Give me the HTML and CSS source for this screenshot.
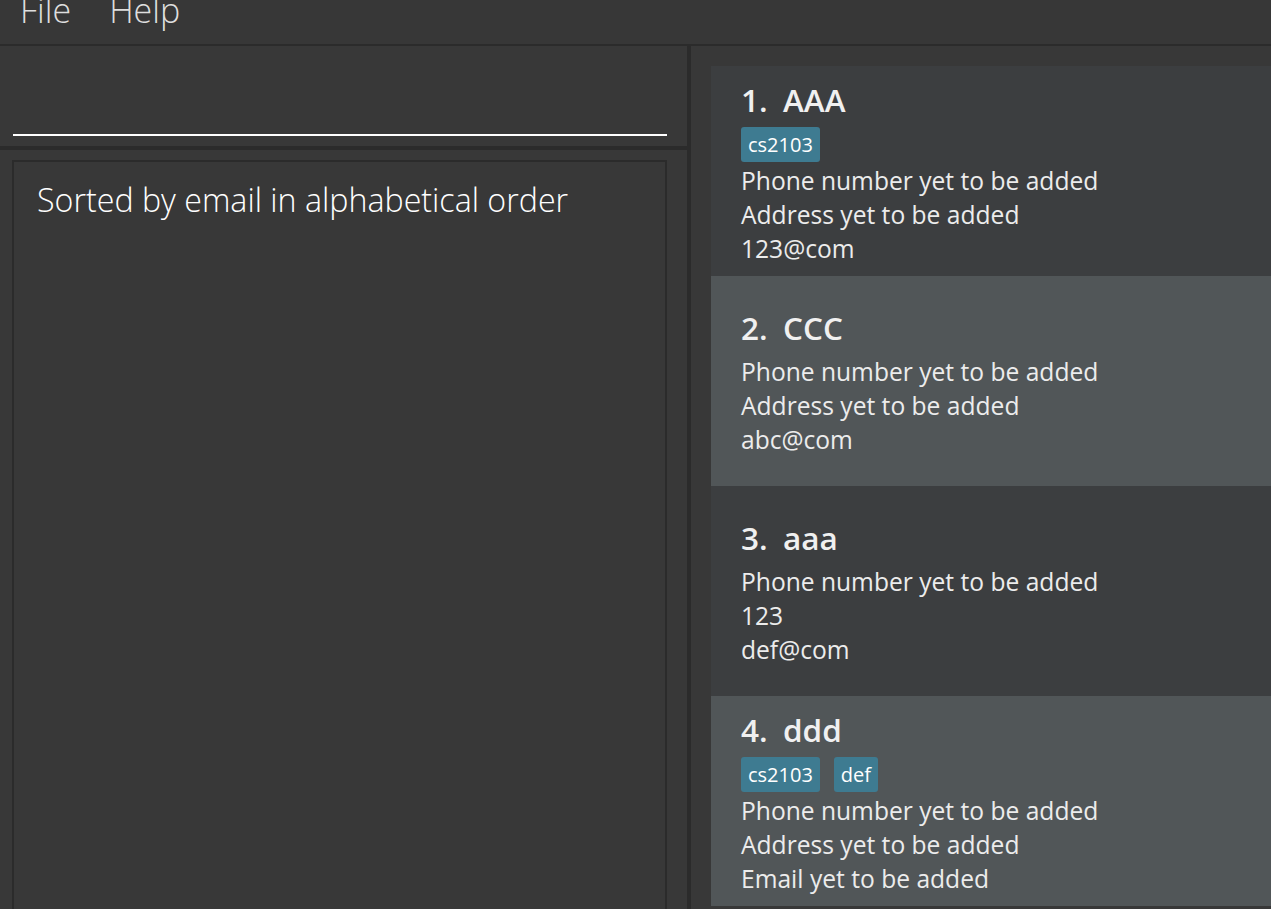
FILE: index.html
```html
<!DOCTYPE html>
<html lang="en">
<head>
<meta charset="utf-8">
<title>Address Book</title>
<link rel="stylesheet" href="styles.css">
</head>
<body>
<div class="app">
  <div class="menubar">
    <span class="menu-item">File</span>
    <span class="menu-item">Help</span>
  </div>
  <div class="main">
    <div class="left">
      <div class="command">
        <div class="command-input"></div>
      </div>
      <div class="hdivider"></div>
      <div class="result">
        <div class="result-box">
          <div class="result-text">Sorted by email in alphabetical order</div>
        </div>
      </div>
    </div>
    <div class="vdivider"></div>
    <div class="right">
      <div class="card odd">
        <div class="name"><span class="id">1.</span><span>AAA</span></div>
        <div class="tags"><span class="tag">cs2103</span></div>
        <div class="details">
          <div>Phone number yet to be added</div>
          <div>Address yet to be added</div>
          <div>123@com</div>
        </div>
      </div>
      <div class="card even">
        <div class="name"><span class="id">2.</span><span>CCC</span></div>
        <div class="details">
          <div>Phone number yet to be added</div>
          <div>Address yet to be added</div>
          <div>abc@com</div>
        </div>
      </div>
      <div class="card odd">
        <div class="name"><span class="id">3.</span><span>aaa</span></div>
        <div class="details">
          <div>Phone number yet to be added</div>
          <div>123</div>
          <div>def@com</div>
        </div>
      </div>
      <div class="card even">
        <div class="name"><span class="id">4.</span><span>ddd</span></div>
        <div class="tags"><span class="tag">cs2103</span><span class="tag">def</span></div>
        <div class="details">
          <div>Phone number yet to be added</div>
          <div>Address yet to be added</div>
          <div>Email yet to be added</div>
        </div>
      </div>
    </div>
  </div>
</div>
</body>
</html>
```
FILE: styles.css
```css
html, body {
  margin: 0;
  padding: 0;
  background: #383838;
  height: 909px;
  overflow: hidden;
}

.app {
  display: flex;
  flex-direction: column;
  height: 909px;
  font-family: "Open Sans", "Noto Sans", sans-serif;
}

.menubar {
  height: 44px;
  border-bottom: 2px solid #2b2b2b;
  background: #373737;
  display: flex;
  gap: 38px;
  padding-left: 20px;
  overflow: hidden;
  flex: none;
}

.menu-item {
  font-weight: 300;
  font-size: 34px;
  line-height: 20px;
  color: #dedede;
  display: block;
  height: 44px;
}

.main {
  flex: 1;
  display: flex;
  min-height: 0;
}

.left {
  width: 687px;
  flex: none;
  display: flex;
  flex-direction: column;
}

.command {
  height: 100px;
  flex: none;
  padding: 50px 0 0 13px;
  box-sizing: border-box;
}

.command-input {
  width: 654px;
  height: 38px;
  border-bottom: 2px solid #ffffff;
}

.hdivider {
  height: 4px;
  background: #2b2b2b;
  flex: none;
}

.result {
  flex: 1;
  padding: 10px 20px 0 12px;
  overflow: hidden;
}

.result-box {
  height: 1000px;
  border: 2px solid #2b2b2b;
  padding: 16px 23px;
  box-sizing: border-box;
}

.result-text {
  font-weight: 300;
  font-size: 32.2px;
  color: #ffffff;
  line-height: 43px;
}

.vdivider {
  width: 4px;
  background: #2b2b2b;
  flex: none;
}

.right {
  flex: 1;
  padding: 20px 0 0 20px;
  overflow: hidden;
}

.card {
  height: 210px;
  display: flex;
  flex-direction: column;
  justify-content: center;
  padding-left: 30px;
  box-sizing: border-box;
}

.card.odd {
  background: #3c3e40;
}

.card.even {
  background: #515658;
}

.name {
  font-weight: 600;
  font-size: 31.5px;
  line-height: 42px;
  color: #f0f0f0;
  margin-bottom: 4px;
  display: flex;
}

.id {
  width: 42px;
}

.tags {
  display: flex;
  gap: 14px;
  margin-top: 2px;
}

.tag {
  background: #3e7b91;
  color: #ffffff;
  font-size: 20px;
  line-height: 35px;
  height: 35px;
  padding: 0 7px;
  border-radius: 3px;
}

.details {
  font-size: 24.6px;
  line-height: 34px;
  color: #ececec;
  padding-top: 2px;
  margin-bottom: -2px;
}
```
